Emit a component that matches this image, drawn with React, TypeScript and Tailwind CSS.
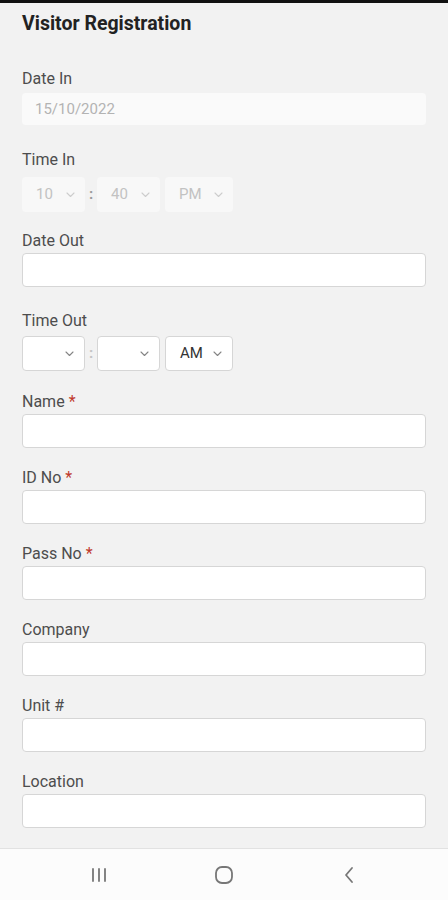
import React from 'react';

const Chevron: React.FC<{ light?: boolean }> = ({ light }) => (
  <svg width="9" height="6" viewBox="0 0 9 6" fill="none" className="shrink-0">
    <path d="M1 1l3.5 3.5L8 1" stroke={light ? '#cdcdcd' : '#858585'} strokeWidth="1.1" strokeLinecap="round" strokeLinejoin="round" />
  </svg>
);

const Select: React.FC<{ value?: string; width: string; disabled?: boolean }> = ({ value, width, disabled }) => (
  <div
    className={`${width} h-[35px] rounded-[4px] flex items-center justify-between pl-[14px] pr-[10px] text-[15px] ${
      disabled ? 'bg-[#f8f8f8] text-[#c2c2c2]' : 'bg-white border border-[#d6d6d6] text-[#333]'
    }`}
  >
    <span>{value ?? ''}</span>
    <Chevron light={disabled} />
  </div>
);

const Label: React.FC<{ text: string; required?: boolean }> = ({ text, required }) => (
  <div className="h-5 leading-5 text-[16px] text-[#4d4d4d]">
    {text}
    {required && <span className="text-[#c0392b] ml-1">*</span>}
  </div>
);

const TextField: React.FC<{ label: string; required?: boolean }> = ({ label, required }) => (
  <div className="flex flex-col">
    <Label text={label} required={required} />
    <div className="mt-[2px] h-[34px] w-full bg-white border border-[#d6d6d6] rounded-[4px]" />
  </div>
);

const TimeRow: React.FC<{ h?: string; m?: string; ampm: string; disabled?: boolean }> = ({ h, m, ampm, disabled }) => (
  <div className="flex items-center">
    <Select value={h} width="w-[63px]" disabled={disabled} />
    <span className={`w-3 text-center text-[15px] font-bold ${disabled ? 'text-[#9a9a9a]' : 'text-[#c4c4c4]'}`}>:</span>
    <Select value={m} width="w-[63px]" disabled={disabled} />
    <div className="w-[5px]" />
    <Select value={ampm} width="w-[68px]" disabled={disabled} />
  </div>
);

export default function App() {
  return (
    <div className="w-[448px] h-[900px] bg-[#f2f2f2] flex flex-col overflow-hidden" style={{ fontFamily: 'Roboto, "Liberation Sans", sans-serif' }}>
      <div className="h-[3px] bg-[#111]" />
      <div className="flex-1 px-[22px]">
        <h1 className="mt-[9px] h-6 leading-6 text-[19.5px] font-bold text-[#222]">Visitor Registration</h1>

        {/* Date In */}
        <div className="mt-[33px]">
          <Label text="Date In" />
          <div className="mt-1 h-8 w-full bg-[#fafafa] rounded-[4px] flex items-center pl-[13px] text-[15px] text-[#b3b3b3]">
            15/10/2022
          </div>
        </div>

        {/* Time In */}
        <div className="mt-[25px]">
          <Label text="Time In" />
          <div className="mt-[7px]">
            <TimeRow h="10" m="40" ampm="PM" disabled />
          </div>
        </div>

        {/* Date Out */}
        <div className="mt-[19px]">
          <TextField label="Date Out" />
        </div>

        {/* Time Out */}
        <div className="mt-6">
          <Label text="Time Out" />
          <div className="mt-[5px]">
            <TimeRow ampm="AM" />
          </div>
        </div>

        <div className="mt-[21px] flex flex-col gap-5">
          <TextField label="Name" required />
          <TextField label="ID No" required />
          <TextField label="Pass No" required />
          <TextField label="Company" />
          <TextField label="Unit #" />
          <TextField label="Location" />
        </div>
      </div>

      {/* Android nav bar */}
      <div className="h-[52px] bg-[#fcfcfc] border-t border-[#e2e2e2] flex items-center justify-center">
        <div className="w-[125px] flex justify-center">
          <svg width="18" height="16" viewBox="0 0 18 16" fill="none">
            <path d="M3 2v12M9 2v12M15 2v12" stroke="#777" strokeWidth="1.8" strokeLinecap="round" />
          </svg>
        </div>
        <div className="w-[125px] flex justify-center">
          <svg width="20" height="20" viewBox="0 0 20 20" fill="none">
            <rect x="2" y="2" width="16" height="16" rx="6" stroke="#777" strokeWidth="1.8" />
          </svg>
        </div>
        <div className="w-[125px] flex justify-center">
          <svg width="12" height="18" viewBox="0 0 12 18" fill="none">
            <path d="M9 2L3 9l6 7" stroke="#777" strokeWidth="1.8" strokeLinecap="round" strokeLinejoin="round" />
          </svg>
        </div>
      </div>
    </div>
  );
}
